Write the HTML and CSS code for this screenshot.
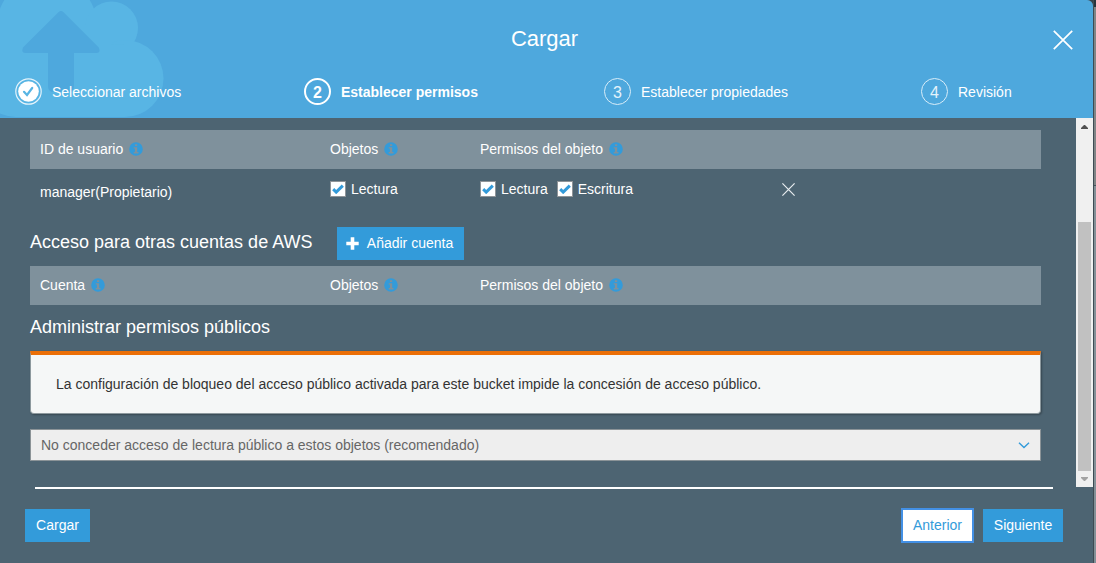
FILE: index.html
```html
<!DOCTYPE html>
<html lang="es">
<head>
<meta charset="utf-8">
<title>Cargar</title>
<link rel="stylesheet" href="styles.css">
</head>
<body>
<svg class="defs" width="0" height="0">
  <symbol id="info" viewBox="0 0 14 14">
    <path fill-rule="evenodd" d="M7 .2a6.8 6.8 0 1 1 0 13.6A6.8 6.8 0 0 1 7 .2zM5.9 2.200v1.800h2.300V2.200zM4.700 5.300v1.200h1.200v3.500H4.700v1.400h4.800V10H8.200V5.300z" fill="#339bda"/>
  </symbol>
  <symbol id="check" viewBox="0 0 12 10">
    <path d="M1.200 5.200l3 2.900L10.800 1.600" fill="none" stroke="#339bda" stroke-width="3"/>
  </symbol>
</svg>
<div class="page">
  <main class="dialog">
    <header class="header">
      <svg class="cloud" width="166" height="118" viewBox="0 0 166 118">
        <g fill="#58b5e4">
          <circle cx="47" cy="26" r="50"/>
          <circle cx="111.500" cy="28" r="26.500"/>
          <circle cx="125" cy="78.500" r="38.500"/>
          <circle cx="16" cy="78.500" r="38.500"/>
          <path d="M0 26h111v18l14 1v72H16L0 110z"/>
        </g>
        <path d="M58.700 12q2.300-2 4.600 0L98.800 47.500q2.200 5-2 5.500H74v33q0 6-6 6H54q-6 0-6-6V53H25q-4-.5-2-5.500z" fill="#4ea8dd"/>
      </svg>
      <h1 class="title">Cargar</h1>
      <button class="close" aria-label="Cerrar"><svg width="20" height="20" viewBox="0 0 20 20"><path d="M.8.800l18.400 18.400M19.200.800L.8 19.200" stroke="#fff" stroke-width="1.700"/></svg></button>
      <nav class="steps">
        <div class="step"><span class="num done"><svg width="27" height="27" viewBox="0 0 27 27"><circle cx="13.500" cy="13.500" r="12.700" fill="none" stroke="#e4f3fb" stroke-width="1.200"/><circle cx="13.500" cy="13.500" r="10.300" fill="#fff"/><path d="M9 13.800l3 3.200 5.200-7" fill="none" stroke="#58b5e4" stroke-width="2.200" stroke-linecap="round"/></svg></span>Seleccionar archivos</div>
        <div class="step active"><span class="num">2</span>Establecer permisos</div>
        <div class="step"><span class="num">3</span>Establecer propiedades</div>
        <div class="step"><span class="num">4</span>Revisión</div>
      </nav>
    </header>
    <div class="body">
      <section class="content">
        <div class="row head"><span>ID de usuario<svg class="info"><use href="#info"/></svg></span><span>Objetos<svg class="info"><use href="#info"/></svg></span><span>Permisos del objeto<svg class="info"><use href="#info"/></svg></span></div>
        <div class="row user">
          <span class="name">manager(Propietario)</span>
          <span class="checks"><label><i class="box"><svg width="12" height="10"><use href="#check"/></svg></i>Lectura</label></span>
          <span class="checks"><label><i class="box"><svg width="12" height="10"><use href="#check"/></svg></i>Lectura</label><label><i class="box"><svg width="12" height="10"><use href="#check"/></svg></i>Escritura</label></span>
          <svg class="remove" width="13" height="13" viewBox="0 0 13 13"><path d="M.4.400l12.200 12.200M12.600.400L.4 12.600" stroke="#e8edf0" stroke-width="1.200"/></svg>
        </div>
        <div class="accounts">
          <h2>Acceso para otras cuentas de AWS</h2>
          <button class="btn add"><svg width="13" height="13" viewBox="0 0 13 13"><path d="M6.500.300v12.400M.3 6.500h12.400" stroke="#fff" stroke-width="3.600"/></svg>Añadir cuenta</button>
        </div>
        <div class="row head"><span>Cuenta<svg class="info"><use href="#info"/></svg></span><span>Objetos<svg class="info"><use href="#info"/></svg></span><span>Permisos del objeto<svg class="info"><use href="#info"/></svg></span></div>
        <h2 class="public">Administrar permisos públicos</h2>
        <div class="alert">La configuración de bloqueo del acceso público activada para este bucket impide la concesión de acceso público.</div>
        <div class="select">No conceder acceso de lectura público a estos objetos (recomendado)<svg width="12" height="7" viewBox="0 0 12 7"><path d="M1 .8l5 4.700 5-4.700" fill="none" stroke="#339bda" stroke-width="1.400"/></svg></div>
      </section>
      <div class="scrollbar">
        <svg width="7" height="4" viewBox="0 0 7 4"><path d="M0 4V3L3 0h1l3 3v1z" fill="#505050"/></svg>
        <div class="thumb"></div>
        <svg width="7" height="4" viewBox="0 0 7 4"><path d="M0 0v1l3 3h1l3-3V0z" fill="#a3a3a3"/></svg>
      </div>
    </div>
    <footer class="footer">
      <button class="btn">Cargar</button>
      <button class="btn prev">Anterior</button>
      <button class="btn next">Siguiente</button>
    </footer>
  </main>
  <div class="backdrop"><div class="navbar"></div><div class="panel"></div></div>
</div>
</body>
</html>
```
FILE: styles.css
```css
* { box-sizing: border-box; }
body { margin: 0; font: 14px/20px "Liberation Sans", Arial, sans-serif; color: #fff; overflow: hidden; }
button { font: inherit; border: 0; padding: 0; background: none; color: inherit; }
h1, h2 { margin: 0; font-weight: 400; }
svg { display: block; flex: none; }
.defs { position: absolute; }
.page { display: flex; width: 1096px; height: 563px; background: #34434c; }
.dialog { width: 1093px; height: 563px; background: #4d6472; border-top-right-radius: 6px; overflow: hidden; }
.backdrop { flex: 1; padding-left: 1px; background: #3d4b53; }
.navbar { height: 7px; background: #26343d; }
.panel { height: 556px; background: linear-gradient(#7f8486 0 178px, #46545c 178px 179px, #839097 179px); }

.header { position: relative; height: 118px; background: #4ea8dd; padding-top: 24px; }
.cloud { position: absolute; left: 0; top: 0; }
.title { position: relative; height: 30px; padding-right: 4px; text-align: center; font-size: 22px; line-height: 30px; }
.close { position: absolute; left: 1053px; top: 30px; }
.steps { position: relative; display: grid; grid-template-columns: 289px 300px 317px 1fr; margin-top: 24px; padding-left: 15px; }
.step { display: flex; align-items: center; gap: 10px; height: 27px; }
.active { font-weight: 700; }
.num { width: 27px; height: 27px; border: 1px solid #d8edf9; border-radius: 50%; text-align: center; font-size: 16px; line-height: 27px; color: #e4f3fb; }
.active .num { border: 2px solid #fff; line-height: 25px; color: #fff; }
.num.done { border: 0; }

.body { display: flex; justify-content: space-between; height: 369px; }
.content { width: 1011px; margin-left: 30px; padding-top: 12px; }
.row { display: grid; grid-template-columns: 290px 150px 298px 1fr; padding: 0 10px; }
.head { height: 39px; align-items: center; padding-bottom: 1px; background: #7f919c; }
.head span { display: flex; align-items: center; }
.info { width: 14px; height: 14px; margin-left: 6px; }
.user { height: 58px; padding-top: 10px; }
.name { padding-top: 3px; }
.checks, .checks label { display: flex; }
.checks { gap: 9px; }
.checks label { gap: 5px; }
.box { display: flex; align-items: center; justify-content: center; width: 16px; height: 16px; margin-top: 2px; background: #fff; border: 1px solid #8f9498; }
.remove { margin: 4px 0 0 4px; }
.accounts { display: flex; align-items: center; height: 39px; padding-bottom: 6px; }
h2 { font-size: 18px; line-height: 24px; }
.accounts h2 { width: 307px; padding-bottom: 3px; }
.btn { height: 33px; padding-bottom: 1px; background: #339bda; display: flex; align-items: center; justify-content: center; }
.add { width: 127px; gap: 8px; padding-right: 2px; }
.public { margin: 10px 0 12px; }
.alert { height: 63px; padding: 19px 25px 0; border: 1px solid #8d999e; border-top: 4px solid #eb6f07; border-radius: 0 0 4px 4px; background: #f5f7f7; color: #333; box-shadow: 1px 1px 2px rgba(0,0,0,.3); }
.select { display: flex; align-items: center; justify-content: space-between; height: 32px; margin-top: 15px; padding: 0 10px; border: 1px solid #8b9397; background: #eee; color: #666; }
.scrollbar { display: flex; flex-direction: column; align-items: center; width: 17px; height: 369px; padding-top: 7px; background: #f0f0f0; }
.thumb { width: 13px; height: 249px; margin: 93px 0 6px; background: #c1c1c1; }

.footer { display: flex; padding: 22px 30px 0 25px; height: 76px; background: linear-gradient(#fff, #fff) 35px 0 / 1018px 2px no-repeat; }
.footer .btn { width: 65px; }
.footer .prev { width: 73px; height: 35px; margin: -1px 9px 0 auto; background: #fff; border: 2px solid #4390e5; color: #339bda; }
.footer .next { width: 80px; }
```
